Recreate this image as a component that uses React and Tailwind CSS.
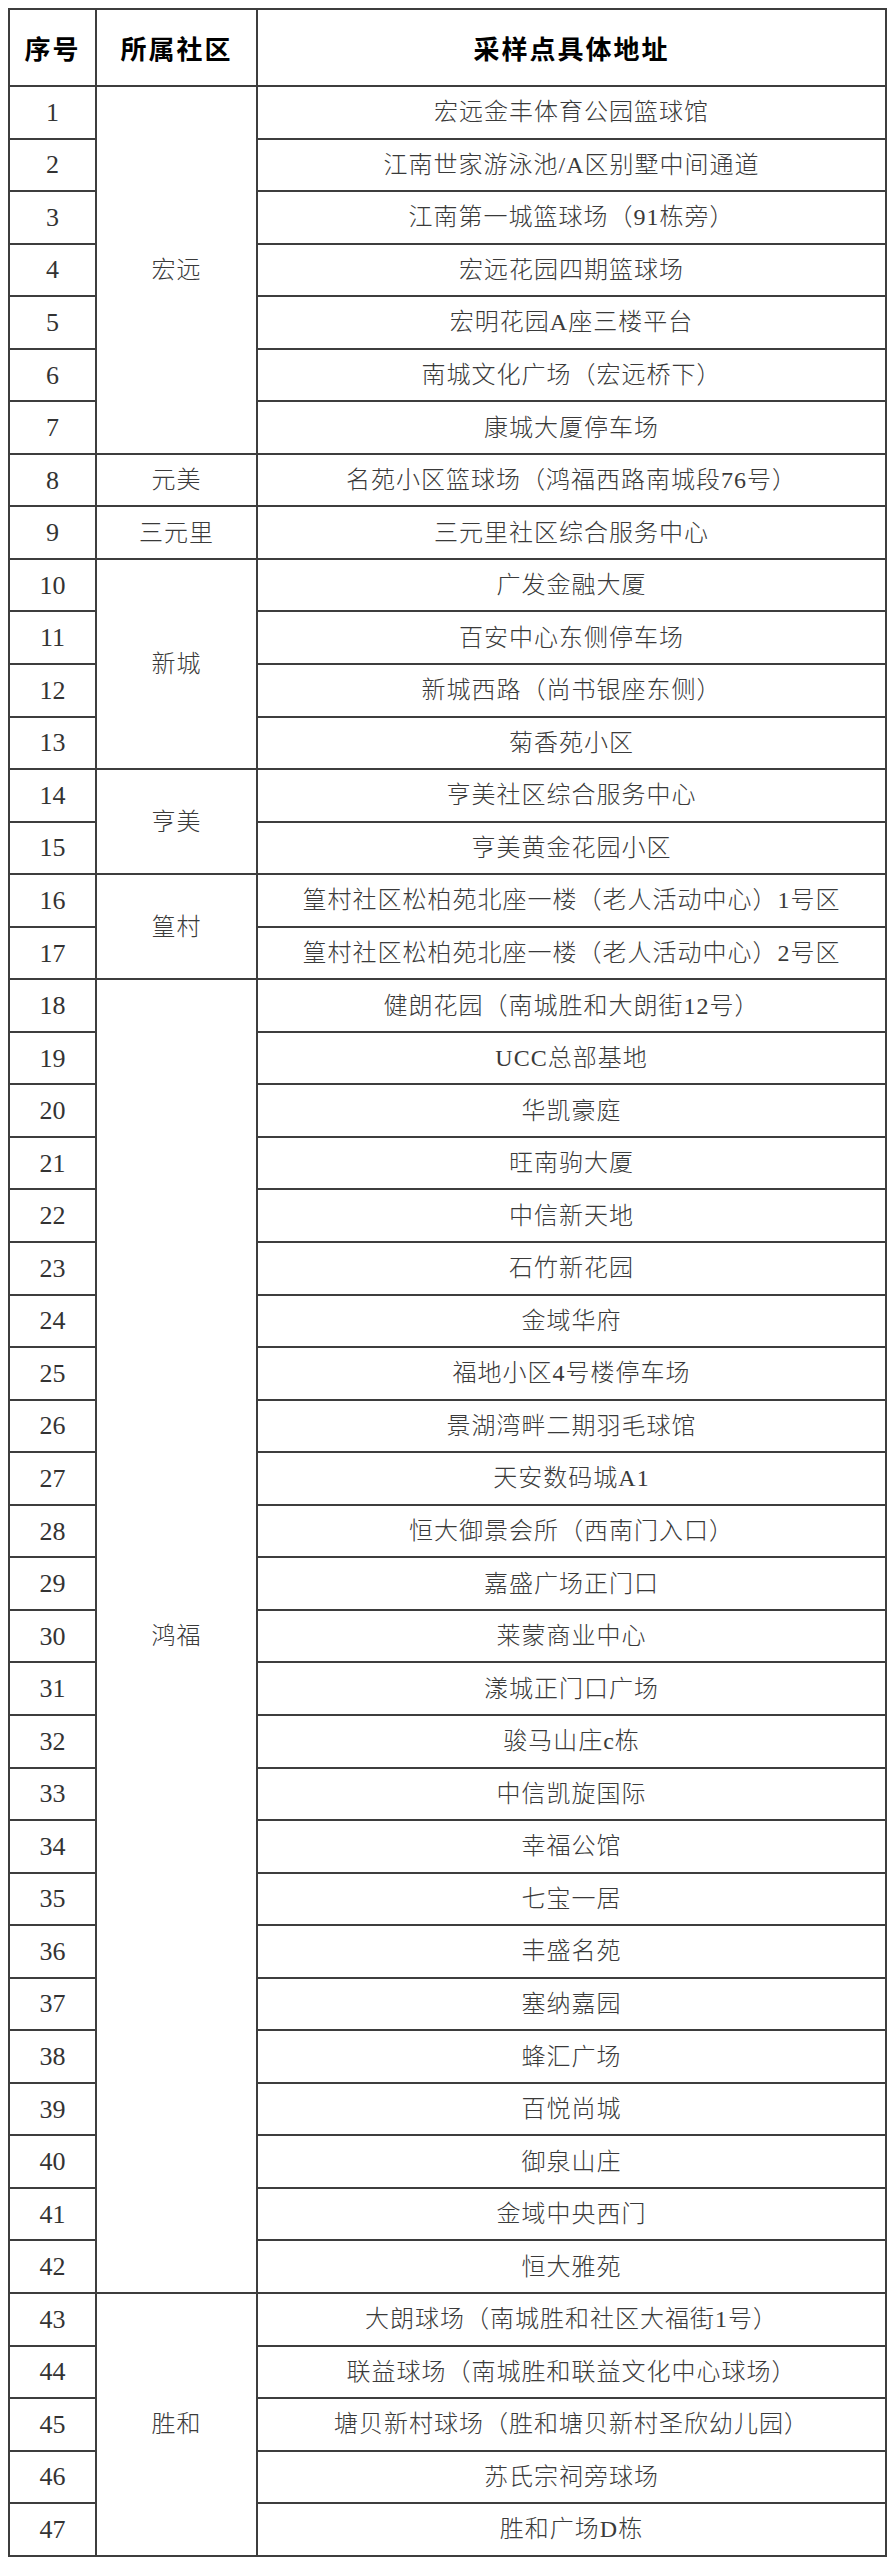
const groups = [
  {
    name: "宏远",
    items: [
      "宏远金丰体育公园篮球馆",
      "江南世家游泳池/A区别墅中间通道",
      "江南第一城篮球场（91栋旁）",
      "宏远花园四期篮球场",
      "宏明花园A座三楼平台",
      "南城文化广场（宏远桥下）",
      "康城大厦停车场",
    ],
  },
  { name: "元美", items: ["名苑小区篮球场（鸿福西路南城段76号）"] },
  { name: "三元里", items: ["三元里社区综合服务中心"] },
  {
    name: "新城",
    items: ["广发金融大厦", "百安中心东侧停车场", "新城西路（尚书银座东侧）", "菊香苑小区"],
  },
  { name: "亨美", items: ["亨美社区综合服务中心", "亨美黄金花园小区"] },
  {
    name: "篁村",
    items: [
      "篁村社区松柏苑北座一楼（老人活动中心）1号区",
      "篁村社区松柏苑北座一楼（老人活动中心）2号区",
    ],
  },
  {
    name: "鸿福",
    items: [
      "健朗花园（南城胜和大朗街12号）",
      "UCC总部基地",
      "华凯豪庭",
      "旺南驹大厦",
      "中信新天地",
      "石竹新花园",
      "金域华府",
      "福地小区4号楼停车场",
      "景湖湾畔二期羽毛球馆",
      "天安数码城A1",
      "恒大御景会所（西南门入口）",
      "嘉盛广场正门口",
      "莱蒙商业中心",
      "漾城正门口广场",
      "骏马山庄c栋",
      "中信凯旋国际",
      "幸福公馆",
      "七宝一居",
      "丰盛名苑",
      "塞纳嘉园",
      "蜂汇广场",
      "百悦尚城",
      "御泉山庄",
      "金域中央西门",
      "恒大雅苑",
    ],
  },
  {
    name: "胜和",
    items: [
      "大朗球场（南城胜和社区大福街1号）",
      "联益球场（南城胜和联益文化中心球场）",
      "塘贝新村球场（胜和塘贝新村圣欣幼儿园）",
      "苏氏宗祠旁球场",
      "胜和广场D栋",
    ],
  },
];

const cell = "border-2 border-[#3d3d3d] text-center align-middle p-0";
const body = "text-[#3a3a3a] text-[24px] tracking-[1px] font-light";

export default function App() {
  let n = 0;
  const rows = [];
  groups.forEach((g) => {
    g.items.forEach((addr, i) => {
      n += 1;
      rows.push(
        <tr key={n} className="h-[52.55px]">
          <td className={`${cell} text-[#333] text-[26px]`}>{n}</td>
          {i === 0 && (
            <td rowSpan={g.items.length} className={`${cell} ${body}`}>
              {g.name}
            </td>
          )}
          <td className={`${cell} ${body}`}>{addr}</td>
        </tr>
      );
    });
  });

  return (
    <div
      className="bg-white w-[893px] h-[2560px] overflow-hidden pt-[8px] pl-[8px]"
      style={{ fontFamily: '"Liberation Serif", "Noto Sans CJK SC", serif' }}
    >
      <table className="table-fixed border-collapse w-[877px]">
        <colgroup>
          <col className="w-[87px]" />
          <col className="w-[161px]" />
          <col className="w-[629px]" />
        </colgroup>
        <thead>
          <tr className="h-[77px]">
            {["序号", "所属社区", "采样点具体地址"].map((h) => (
              <th
                key={h}
                className={`${cell} text-black text-[26px] tracking-[2px] font-bold`}
                style={{ fontFamily: '"Noto Sans CJK SC", sans-serif' }}
              >
                {h}
              </th>
            ))}
          </tr>
        </thead>
        <tbody>{rows}</tbody>
      </table>
    </div>
  );
}
